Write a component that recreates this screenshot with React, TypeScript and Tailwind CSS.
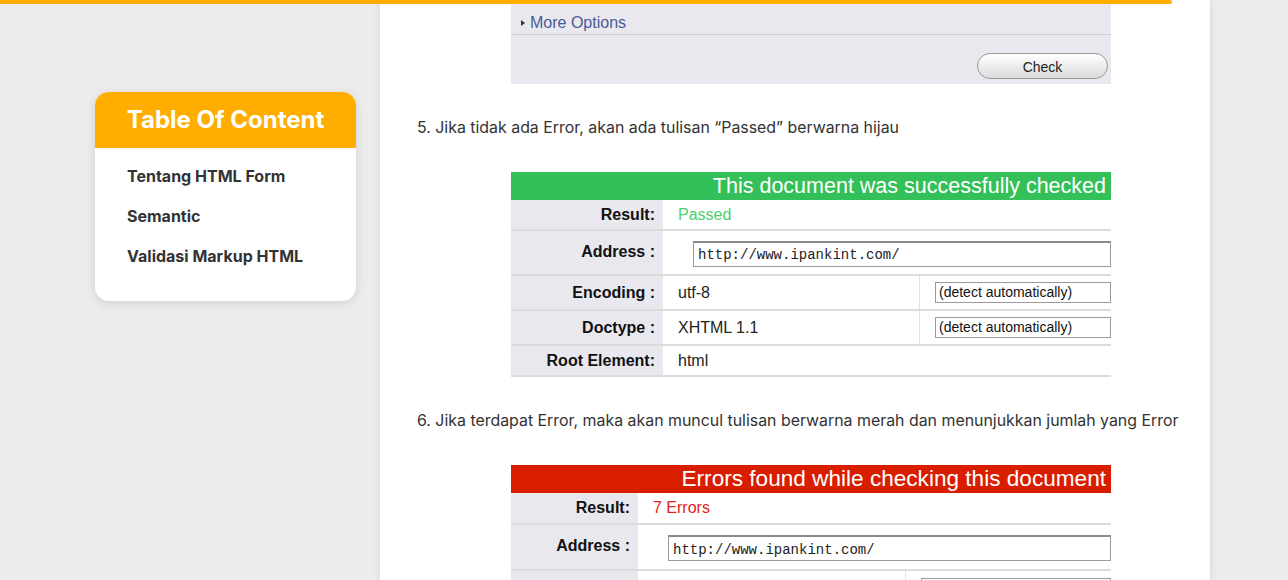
export default function App() {
  const arial = { fontFamily: '"Liberation Sans", Arial, sans-serif' };
  const mono = { fontFamily: '"Liberation Mono", "Courier New", monospace' };

  return (
    <div className="relative h-[580px] w-full overflow-hidden bg-[#ececec]" style={{ fontFamily: 'Inter, "Noto Sans", sans-serif' }}>
      {/* reading progress */}
      <div className="absolute left-0 top-0 z-10 h-[4px] w-[1172px] rounded-r-full bg-[#ffae00]" />

      <div className="flex gap-[24px] pl-[95px]">
        {/* Table of content */}
        <aside className="w-[261px] shrink-0 pt-[92px]">
          <div className="overflow-hidden rounded-[14px] bg-white shadow-[0_2px_10px_rgba(0,0,0,0.12)]">
            <div className="flex h-[56px] items-center justify-center bg-[#ffae00]">
              <h3 className="text-[24px] font-bold text-white">Table Of Content</h3>
            </div>
            <ul className="flex flex-col gap-[18px] px-[32px] pb-[34px] pt-[17px] text-[16px] font-bold leading-[22px] text-[#333]">
              <li>Tentang HTML Form</li>
              <li>Semantic</li>
              <li>Validasi Markup HTML</li>
            </ul>
          </div>
        </aside>

        {/* Article */}
        <main className="h-[580px] w-[830px] shrink-0 bg-white pl-[37px] shadow-[0_0_8px_rgba(0,0,0,0.1)]">
          {/* image: more options / check */}
          <div className="ml-[94px] h-[84px] w-[600px] bg-[#e8e8ee]" style={arial}>
            <div className="flex h-[35px] items-center border-b border-[#cfcfd6] pl-[10px] pt-[12px]">
              <span className="mr-[5px] inline-block border-y-[3.5px] border-l-[4px] border-y-transparent border-l-[#333]" />
              <span className="text-[16px] text-[#4b5a98]">More Options</span>
            </div>
            <div className="flex justify-end pr-[3px] pt-[18px]">
              <button className="h-[26px] w-[131px] rounded-full border border-[#9a9a9a] bg-gradient-to-b from-white to-[#dcdcdc] pt-[2px] text-[14px] text-[#222]">
                Check
              </button>
            </div>
          </div>

          <p className="mt-[34px] text-[15.9px] leading-[20px] text-[#333]">
            5. Jika tidak ada Error, akan ada tulisan “Passed” berwarna hijau
          </p>

          {/* image: passed */}
          <div className="ml-[94px] mt-[34px] w-[600px] overflow-hidden" style={arial}>
            <div className="flex h-[28px] items-center justify-end whitespace-nowrap bg-[#33c058] pr-[5px] text-[21.5px] text-white">
              This document was successfully checked
            </div>
            <div className="flex h-[31px] border-b-2 border-[#dcdcdc]">
              <div className="flex w-[152px] shrink-0 items-center justify-end bg-[#e8e8ee] pr-[8px] text-[16px] font-bold text-[#111]">Result:</div>
              <div className="flex items-center pl-[15px] text-[16px] text-[#4ccf6a]">Passed</div>
            </div>
            <div className="flex h-[45px] border-b-2 border-[#dcdcdc]">
              <div className="flex w-[152px] shrink-0 items-center justify-end bg-[#e8e8ee] pb-[2px] pr-[8px] text-[16px] font-bold text-[#111]">Address :</div>
              <div className="flex flex-1 items-center pl-[30px] pt-[2px]">
                <div className="flex h-[26px] w-full items-center border border-[#9a9a9a] border-t-2 border-t-[#8a8a8a] pl-[4px] pt-[3px] text-[14px] text-[#222]" style={mono}>
                  http://www.ipankint.com/
                </div>
              </div>
            </div>
            {[
              ["Encoding :", "utf-8"],
              ["Doctype :", "XHTML 1.1"],
            ].map(([k, v]) => (
              <div key={k} className="flex h-[35px] border-b-2 border-[#dcdcdc]">
                <div className="flex w-[152px] shrink-0 items-center justify-end bg-[#e8e8ee] pr-[8px] text-[16px] font-bold text-[#111]">{k}</div>
                <div className="flex w-[257px] shrink-0 items-center border-r border-[#e2e2e2] pl-[15px] text-[16px] text-[#222]">{v}</div>
                <div className="flex flex-1 items-center pl-[15px]">
                  <div className="flex h-[21px] w-full items-center border border-[#9a9a9a] pl-[3px] text-[14px] text-[#111]">(detect automatically)</div>
                </div>
              </div>
            ))}
            <div className="flex h-[31px] border-b-2 border-[#dcdcdc]">
              <div className="flex w-[152px] shrink-0 items-center justify-end bg-[#e8e8ee] pr-[8px] text-[16px] font-bold text-[#111]">Root Element:</div>
              <div className="flex items-center pl-[15px] text-[16px] text-[#222]">html</div>
            </div>
          </div>

          <p className="mt-[34px] text-[15.9px] leading-[20px] text-[#333]">
            6. Jika terdapat Error, maka akan muncul tulisan berwarna merah dan menunjukkan jumlah yang Error
          </p>

          {/* image: errors */}
          <div className="ml-[94px] mt-[34px] w-[600px] overflow-hidden" style={arial}>
            <div className="flex h-[28px] items-center justify-end whitespace-nowrap bg-[#d91e00] pr-[5px] text-[22.6px] text-white">
              Errors found while checking this document
            </div>
            <div className="flex h-[32px] border-b-2 border-[#dcdcdc]">
              <div className="flex w-[127px] shrink-0 items-center justify-end bg-[#e8e8ee] pr-[8px] text-[16px] font-bold text-[#111]">Result:</div>
              <div className="flex items-center pl-[15px] text-[16px] text-[#e0231b]">7 Errors</div>
            </div>
            <div className="flex h-[46px] border-b-2 border-[#dcdcdc]">
              <div className="flex w-[127px] shrink-0 items-center justify-end bg-[#e8e8ee] pb-[2px] pr-[8px] text-[16px] font-bold text-[#111]">Address :</div>
              <div className="flex flex-1 items-center pl-[30px] pt-[2px]">
                <div className="flex h-[26px] w-full items-center border border-[#9a9a9a] border-t-2 border-t-[#8a8a8a] pl-[4px] pt-[3px] text-[14px] text-[#222]" style={mono}>
                  http://www.ipankint.com/
                </div>
              </div>
            </div>
            <div className="flex h-[35px]">
              <div className="w-[127px] shrink-0 bg-[#e8e8ee]" />
              <div className="w-[268px] shrink-0 border-r border-[#e2e2e2]" />
              <div className="flex flex-1 items-start pl-[15px] pt-[7px]">
                <div className="h-[21px] w-full border border-[#9a9a9a]" />
              </div>
            </div>
          </div>
        </main>
      </div>
    </div>
  );
}
